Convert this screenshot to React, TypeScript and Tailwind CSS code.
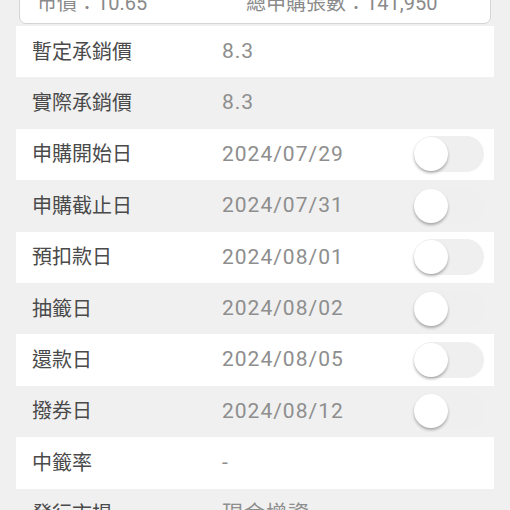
import React from "react";

const rows: { label: string; value: string; toggle: boolean }[] = [
  { label: "暫定承銷價", value: "8.3", toggle: false },
  { label: "實際承銷價", value: "8.3", toggle: false },
  { label: "申購開始日", value: "2024/07/29", toggle: true },
  { label: "申購截止日", value: "2024/07/31", toggle: true },
  { label: "預扣款日", value: "2024/08/01", toggle: true },
  { label: "抽籤日", value: "2024/08/02", toggle: true },
  { label: "還款日", value: "2024/08/05", toggle: true },
  { label: "撥券日", value: "2024/08/12", toggle: true },
  { label: "中籤率", value: "-", toggle: false },
  { label: "發行市場", value: "現金增資", toggle: false },
];

function Toggle() {
  return (
    <div className="relative h-[36px] w-[70px] rounded-full bg-[#efefef]">
      <div className="absolute left-0 top-[1px] h-[34px] w-[34px] rounded-full bg-white shadow-[0_2px_3px_rgba(0,0,0,0.3)]" />
    </div>
  );
}

export default function App() {
  return (
    <div
      className="h-[510px] w-[510px] overflow-hidden bg-[#f0f0f0]"
      style={{ fontFamily: '"Roboto", "Noto Sans CJK TC", sans-serif' }}
    >
      <div className="mx-[19px] -mt-[26px] flex h-[50px] items-end rounded-[7px] border border-[#d4d4d4] bg-white pb-[10px] text-[20px] text-[#8a8a8a]">
        <div className="w-[226px] pl-[17px] leading-none">市價：10.65</div>
        <div className="leading-none">總申購張數：141,950</div>
      </div>
      <div className="mx-[16px] mt-[2px] flex flex-col">
        {rows.map((r, i) => (
          <div
            key={r.label}
            className={`flex h-[51.4px] shrink-0 items-center pl-[16px] ${i % 2 === 0 ? "bg-white" : "bg-[#f0f0f0]"}`}
          >
            <div className="w-[190px] text-[20px] text-[#4a4a4a]">{r.label}</div>
            <div className="w-[192px] text-[21px] tracking-[1px] text-[#8e8e8e]">{r.value}</div>
            {r.toggle && <Toggle />}
          </div>
        ))}
      </div>
    </div>
  );
}
